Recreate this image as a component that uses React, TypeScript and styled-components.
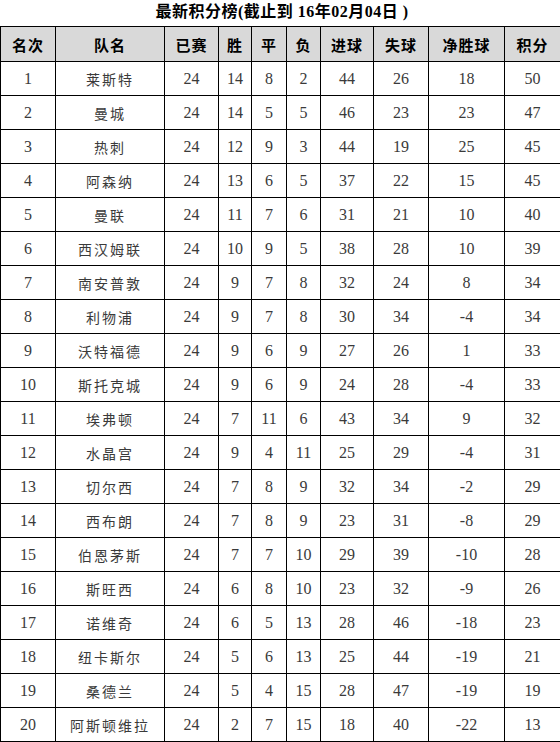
import React from 'react';
import styled, { createGlobalStyle } from 'styled-components';

const GlobalStyle = createGlobalStyle`
  html, body {
    margin: 0;
    padding: 0;
    background: #ffffff;
  }
  body {
    font-family: "Liberation Serif", "Noto Sans CJK SC", serif;
  }
`;

type Row = [number, string, number, number, number, number, number, number, number, number];

const rows: Row[] = [
  [1, '莱斯特', 24, 14, 8, 2, 44, 26, 18, 50],
  [2, '曼城', 24, 14, 5, 5, 46, 23, 23, 47],
  [3, '热刺', 24, 12, 9, 3, 44, 19, 25, 45],
  [4, '阿森纳', 24, 13, 6, 5, 37, 22, 15, 45],
  [5, '曼联', 24, 11, 7, 6, 31, 21, 10, 40],
  [6, '西汉姆联', 24, 10, 9, 5, 38, 28, 10, 39],
  [7, '南安普敦', 24, 9, 7, 8, 32, 24, 8, 34],
  [8, '利物浦', 24, 9, 7, 8, 30, 34, -4, 34],
  [9, '沃特福德', 24, 9, 6, 9, 27, 26, 1, 33],
  [10, '斯托克城', 24, 9, 6, 9, 24, 28, -4, 33],
  [11, '埃弗顿', 24, 7, 11, 6, 43, 34, 9, 32],
  [12, '水晶宫', 24, 9, 4, 11, 25, 29, -4, 31],
  [13, '切尔西', 24, 7, 8, 9, 32, 34, -2, 29],
  [14, '西布朗', 24, 7, 8, 9, 23, 31, -8, 29],
  [15, '伯恩茅斯', 24, 7, 7, 10, 29, 39, -10, 28],
  [16, '斯旺西', 24, 6, 8, 10, 23, 32, -9, 26],
  [17, '诺维奇', 24, 6, 5, 13, 28, 46, -18, 23],
  [18, '纽卡斯尔', 24, 5, 6, 13, 25, 44, -19, 21],
  [19, '桑德兰', 24, 5, 4, 15, 28, 47, -19, 19],
  [20, '阿斯顿维拉', 24, 2, 7, 15, 18, 40, -22, 13],
];

const headers = ['名次', '队名', '已赛', '胜', '平', '负', '进球', '失球', '净胜球', '积分'];
const widths = [55, 109, 54, 33, 35, 34, 53, 55, 76, 56];

const Page = styled.div`
  width: 560px;
`;

const Title = styled.div`
  height: 26px;
  line-height: 24px;
  text-align: center;
  font-family: "Liberation Serif", "Noto Sans CJK SC", serif;
  font-weight: 700;
  font-size: 16px;
  letter-spacing: 0.5px;
  color: #000;
  padding-left: 4px;
`;

const Table = styled.table`
  width: 560px;
  table-layout: fixed;
  border-collapse: collapse;
`;

const HeadRow = styled.tr`
  height: 35px;
`;

const BodyRow = styled.tr`
  height: 34px;
`;

const HeadCell = styled.th`
  border: 1px solid #000;
  background: #d9d9d9;
  padding: 0;
  text-align: center;
  font-family: "Noto Sans CJK SC", sans-serif;
  font-weight: 700;
  font-size: 15px;
  letter-spacing: 1px;
  color: #000;
`;

const Cell = styled.td<{ $cjk?: boolean }>`
  border: 1px solid #000;
  padding: 0;
  text-align: center;
  font-family: ${(p) => (p.$cjk ? '"Noto Sans CJK SC", sans-serif' : '"Liberation Serif", "DejaVu Serif", serif')};
  font-size: ${(p) => (p.$cjk ? '14px' : '16px')};
  font-weight: 400;
  letter-spacing: ${(p) => (p.$cjk ? '2px' : '0')};
  color: #3a3a3a;
`;

export default function App() {
  return (
    <Page>
      <GlobalStyle />
      <Title>最新积分榜(截止到 16年02月04日 )</Title>
      <Table>
        <colgroup>
          {widths.map((w, i) => (
            <col key={i} style={{ width: w }} />
          ))}
        </colgroup>
        <thead>
          <HeadRow>
            {headers.map((h) => (
              <HeadCell key={h}>{h}</HeadCell>
            ))}
          </HeadRow>
        </thead>
        <tbody>
          {rows.map((r) => (
            <BodyRow key={r[0]}>
              {r.map((v, i) => (
                <Cell key={i} $cjk={i === 1}>
                  {v}
                </Cell>
              ))}
            </BodyRow>
          ))}
        </tbody>
      </Table>
    </Page>
  );
}
